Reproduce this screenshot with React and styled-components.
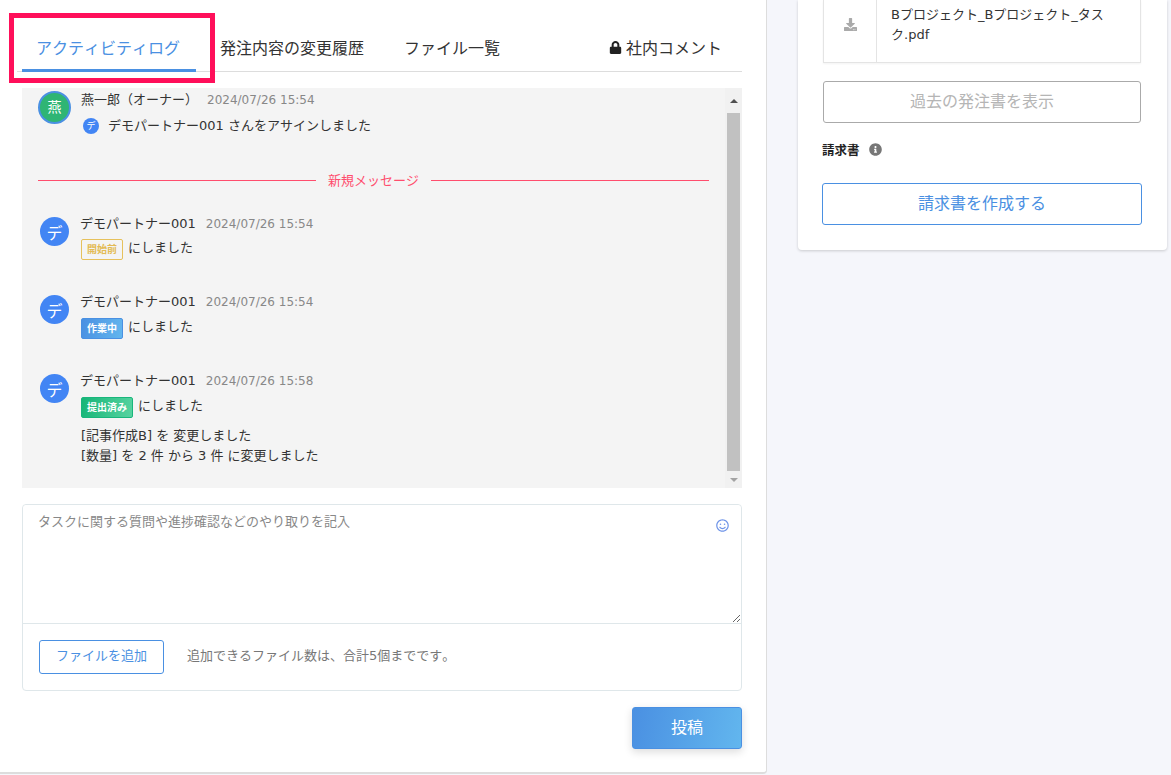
import React from 'react'
import styled, { createGlobalStyle } from 'styled-components'
import { FaDownload, FaInfoCircle, FaLock, FaRegSmile } from 'react-icons/fa'

const fontStack = '"DejaVu Sans", "Noto Sans CJK JP", sans-serif'

const Global = createGlobalStyle`
  html, body {
    margin: 0;
    padding: 0;
    background: #f5f6fb;
    font-family: ${fontStack};
    font-kerning: none;
    color: #333;
    overflow: hidden;
  }
  * { box-sizing: border-box; }
  button, textarea { font-kerning: none; }
`

const blue = '#4a90e2'

const Shell = styled.div`
  position: relative;
  display: flex;
  align-items: flex-start;
  width: 1171px;
  height: 775px;
  overflow: hidden;
`
const MainCard = styled.main`
  flex: none;
  width: 767px;
  height: 774px;
  padding: 24px 24px 0 17px;
  background: #fff;
  border-right: 1px solid #ddd;
  border-bottom: 2px solid #ddd;
  border-radius: 0 0 4px 0;
`
const Highlight = styled.div`
  position: absolute;
  left: 9px;
  top: 13px;
  width: 206px;
  height: 70px;
  border: 5px solid #ff0f5a;
  pointer-events: none;
`
const Tabs = styled.nav`
  display: flex;
  height: 48px;
  padding-left: 5px;
  border-bottom: 1px solid #ddd;
`
const Tab = styled.div`
  flex: none;
  display: flex;
  align-items: center;
  gap: 4px;
  height: 48px;
  padding: ${({ $active }) => ($active ? '0 16px 0 14px' : '0 20px 2px')};
  margin-left: ${({ $end, $push }) => ($end ? 'auto' : `${$push || 0}px`)};
  font-size: 16px;
  white-space: nowrap;
  color: ${({ $active }) => ($active ? blue : '#333')};
  border-bottom: ${({ $active }) => ($active ? `3px solid ${blue}` : 'none')};
  svg {
    font-size: 13px;
    color: #222;
  }
`
const LogPanel = styled.section`
  display: flex;
  height: 400px;
  margin: 16px 0 0 5px;
  background: #f4f4f4;
`
const LogBody = styled.div`
  flex: 1;
  min-width: 0;
  padding: 3px 16px 0;
`
const Scrollbar = styled.div`
  display: flex;
  flex-direction: column;
  align-items: center;
  width: 17px;
  background: #f1f1f1;
`
const ScrollButton = styled.div`
  flex: 0 0 ${({ $h }) => $h}px;
  display: flex;
  align-items: center;
  justify-content: center;
  &::after {
    content: '';
    border-left: 4px solid transparent;
    border-right: 4px solid transparent;
    border-bottom: ${({ $down }) => ($down ? 'none' : '4px solid #505050')};
    border-top: ${({ $down }) => ($down ? '4px solid #a3a3a3' : 'none')};
  }
`
const ScrollThumb = styled.div`
  flex: 1;
  width: 13px;
  background: #c1c1c1;
`
const Message = styled.article`
  display: flex;
  align-items: flex-start;
  height: ${({ $h }) => $h}px;
  padding-left: ${({ $indent }) => $indent || 0}px;
`
const Avatar = styled.div`
  flex: none;
  display: flex;
  align-items: center;
  justify-content: center;
  width: 29px;
  height: 29px;
  margin-top: 2px;
  border-radius: 50%;
  font-size: 16px;
  color: #fff;
  background: #4285f4;
`
const OwnerAvatar = styled(Avatar)`
  width: 33px;
  height: 33px;
  margin-top: 0;
  padding-bottom: 3px;
  font-size: 14px;
  background: #2fb574;
  border: 2px solid ${blue};
`
const MessageBody = styled.div`
  margin-left: ${({ $gap }) => $gap}px;
  font-size: 13px;
  line-height: 20px;
`
const MessageHead = styled.div`
  display: flex;
  align-items: center;
  gap: ${({ $gap }) => $gap}px;
  height: 18px;
  color: #333;
`
const Stamp = styled.span`
  font-size: 12px;
  color: #888;
`
const Line = styled.div`
  display: flex;
  align-items: center;
  gap: ${({ $gap }) => $gap || 5}px;
  height: 21px;
  margin-top: ${({ $top }) => $top}px;
  color: #333;
`
const Assignee = styled.span`
  display: flex;
  align-items: center;
  justify-content: center;
  width: 16px;
  height: 16px;
  margin-left: 2px;
  border-radius: 50%;
  font-size: 9px;
  color: #fff;
  background: #4285f4;
`
const Badge = styled.span`
  display: flex;
  align-items: center;
  justify-content: center;
  height: 21px;
  padding: 0 5px;
  margin: 4px 0 0 1px;
  border-radius: 2px;
  border: 1px solid ${({ $border }) => $border};
  font-size: 10px;
  font-weight: 700;
  color: ${({ $color }) => $color};
  background: ${({ $bg }) => $bg};
`
const Notes = styled.div`
  margin-top: 10px;
  padding-left: 1px;
  color: #333;
`
const Divider = styled.div`
  display: flex;
  align-items: center;
  gap: 12px;
  height: 23px;
  margin: 0 0 23px;
  font-size: 13px;
  color: #ff4d6d;
  &::before,
  &::after {
    content: '';
    flex: 1;
    height: 1px;
    background: #ff4d6d;
  }
`
const DividerLabel = styled.span`
  padding-bottom: 3px;
`
const Composer = styled.section`
  position: relative;
  display: flex;
  flex-direction: column;
  height: 187px;
  margin: 16px 0 0 5px;
  border: 1px solid #dfe7ea;
  border-radius: 4px;
`
const Input = styled.textarea`
  display: block;
  width: 100%;
  height: 119px;
  padding: 7px 40px 8px 15px;
  border: 0;
  border-bottom: 1px solid #dfe7ea;
  border-radius: 4px 4px 0 0;
  outline: none;
  resize: vertical;
  font: 13px/20px ${fontStack};
  color: #333;
  &::placeholder {
    color: #888;
    opacity: 1;
  }
`
const Emoji = styled.span`
  position: absolute;
  top: 14px;
  right: 12px;
  display: flex;
  font-size: 13px;
  color: #6f94e8;
`
const ComposerFoot = styled.div`
  flex: 1;
  display: flex;
  align-items: center;
  gap: 23px;
  padding: 0 16px;
`
const AddFile = styled.button`
  width: 125px;
  height: 34px;
  padding: 0 0 5px;
  background: #fff;
  border: 1px solid ${blue};
  border-radius: 3px;
  font: 13px ${fontStack};
  color: ${blue};
`
const Hint = styled.span`
  padding-bottom: 6px;
  font-size: 13px;
  color: #777;
`
const Actions = styled.div`
  display: flex;
  justify-content: flex-end;
  margin-top: 16px;
`
const PostButton = styled.button`
  width: 110px;
  height: 42px;
  padding: 0 0 4px;
  border: 1px solid #4a90e2;
  border-radius: 3px;
  background: linear-gradient(100deg, #4a90e2, #62b6ee);
  box-shadow: 0 3px 8px rgba(0, 0, 0, 0.14);
  font: 16px ${fontStack};
  color: #fff;
`
const SideCard = styled.aside`
  flex: none;
  width: 369px;
  height: 250px;
  margin-left: 31px;
  padding: 0 24px 0 24px;
  background: #fff;
  border-radius: 0 0 4px 4px;
  box-shadow: 0 1px 3px rgba(0, 0, 0, 0.18);
`
const FileRow = styled.div`
  display: flex;
  width: 318px;
  height: 63px;
  margin-left: 1px;
  border: 1px solid #e4e4e4;
  border-top: 0;
  box-shadow: 0 1px 2px rgba(0, 0, 0, 0.05);
`
const FileIcon = styled.div`
  flex: 0 0 53px;
  display: flex;
  justify-content: center;
  padding-top: 18px;
  border-right: 1px solid #e4e4e4;
  font-size: 13px;
  color: #aaa;
`
const FileName = styled.div`
  flex: 1;
  padding: 5px 24px 0 14px;
  font-size: 13px;
  line-height: 20px;
  color: #333;
`
const PastButton = styled.button`
  display: block;
  width: 318px;
  height: 42px;
  margin: 18px 0 0 1px;
  padding: 0 0 4px;
  background: #fff;
  border: 1px solid #aaa;
  border-radius: 3px;
  font: 16px ${fontStack};
  color: #b5b5b5;
`
const SectionLabel = styled.div`
  display: flex;
  align-items: center;
  gap: 9px;
  height: 20px;
  margin-top: 16px;
  font-size: 12.5px;
  font-weight: 700;
  color: #222;
  svg {
    font-size: 13px;
    color: #777;
  }
`
const InvoiceButton = styled.button`
  display: block;
  width: 320px;
  height: 42px;
  margin-top: 24px;
  padding: 0 0 4px;
  background: #fff;
  border: 1px solid ${blue};
  border-radius: 3px;
  font: 16px ${fontStack};
  color: ${blue};
`

const partner = 'デモパートナー001'

const StatusMessage = ({ h, top, time, badge, children }) => (
  <Message $h={h} $indent={2}>
    <Avatar>デ</Avatar>
    <MessageBody $gap={11}>
      <MessageHead $gap={10}>
        <span>{partner}</span>
        <Stamp>{time}</Stamp>
      </MessageHead>
      <Line $top={top}>
        {badge}
        <span>にしました</span>
      </Line>
      {children}
    </MessageBody>
  </Message>
)

export default function App() {
  return (
    <Shell>
      <Global />
      <MainCard>
        <Tabs>
          <Tab $active>アクティビティログ</Tab>
          <Tab $push={4}>発注内容の変更履歴</Tab>
          <Tab>ファイル一覧</Tab>
          <Tab $end>
            <FaLock />
            社内コメント
          </Tab>
        </Tabs>
        <LogPanel>
          <LogBody>
            <Message $h={78}>
              <OwnerAvatar>燕</OwnerAvatar>
              <MessageBody $gap={10}>
                <MessageHead $gap={9}>
                  <span>燕一郎（オーナー）</span>
                  <Stamp>2024/07/26 15:54</Stamp>
                </MessageHead>
                <Line $top={6} $gap={9}>
                  <Assignee>デ</Assignee>
                  <span>デモパートナー001 さんをアサインしました</span>
                </Line>
              </MessageBody>
            </Message>
            <Divider>
              <DividerLabel>新規メッセージ</DividerLabel>
            </Divider>
            <StatusMessage
              h={78}
              top={4}
              time="2024/07/26 15:54"
              badge={<Badge $border="#e6c15c" $color="#e3bb55" $bg="transparent">開始前</Badge>}
            />
            <StatusMessage
              h={79}
              top={5}
              time="2024/07/26 15:54"
              badge={<Badge $border="#4a90e2" $color="#fff" $bg="linear-gradient(100deg, #4a90e2, #62b6ee)">作業中</Badge>}
            />
            <StatusMessage
              h={100}
              top={5}
              time="2024/07/26 15:58"
              badge={<Badge $border="#19b67c" $color="#fff" $bg="linear-gradient(100deg, #16b577, #57d3a0)">提出済み</Badge>}
            >
              <Notes>
                [記事作成B] を 変更しました
                <br />
                [数量] を 2 件 から 3 件 に変更しました
              </Notes>
            </StatusMessage>
          </LogBody>
          <Scrollbar>
            <ScrollButton $h={25} />
            <ScrollThumb />
            <ScrollButton $h={17} $down />
          </Scrollbar>
        </LogPanel>
        <Composer>
          <Input placeholder="タスクに関する質問や進捗確認などのやり取りを記入" />
          <Emoji>
            <FaRegSmile />
          </Emoji>
          <ComposerFoot>
            <AddFile>ファイルを追加</AddFile>
            <Hint>追加できるファイル数は、合計5個までです。</Hint>
          </ComposerFoot>
        </Composer>
        <Actions>
          <PostButton>投稿</PostButton>
        </Actions>
      </MainCard>
      <SideCard>
        <FileRow>
          <FileIcon>
            <FaDownload />
          </FileIcon>
          <FileName>Bプロジェクト_Bプロジェクト_タスク.pdf</FileName>
        </FileRow>
        <PastButton>過去の発注書を表示</PastButton>
        <SectionLabel>
          請求書
          <FaInfoCircle />
        </SectionLabel>
        <InvoiceButton>請求書を作成する</InvoiceButton>
      </SideCard>
      <Highlight />
    </Shell>
  )
}
